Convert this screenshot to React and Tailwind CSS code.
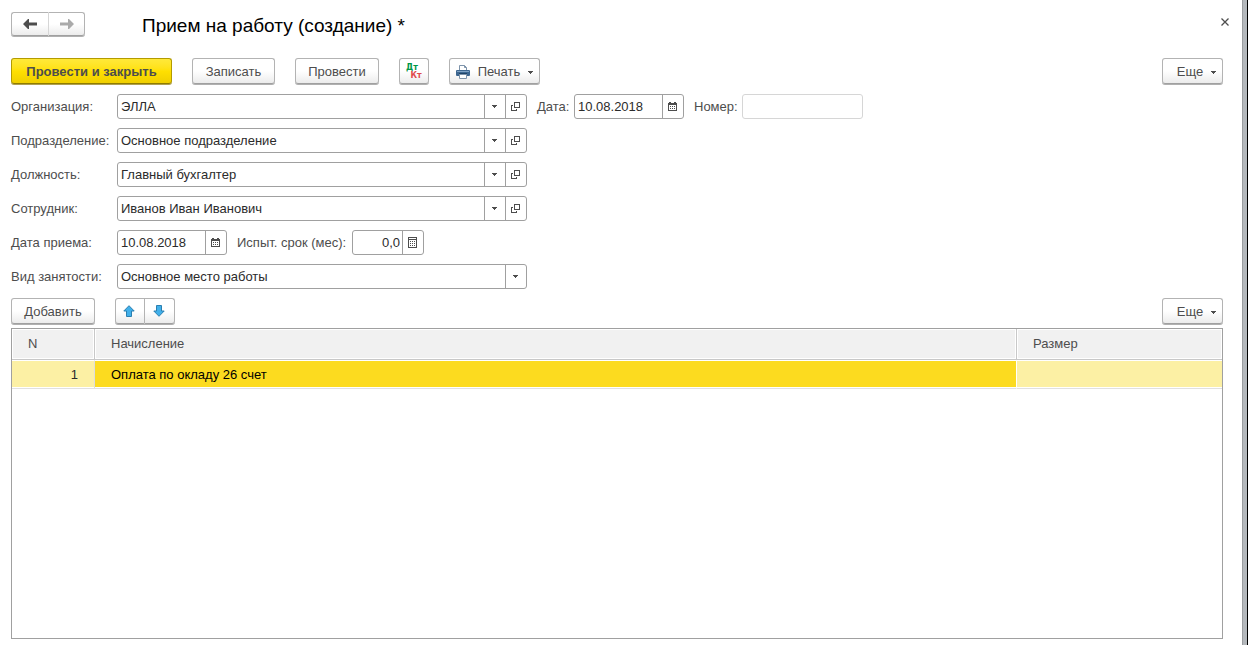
// src/pages/personal/PriemNaRabotu.jsx
import { useState } from "react";

const inputClass = "min-w-0 flex-1 h-full bg-transparent px-[3px] text-[#2b2b2b] outline-none";
const fieldClass =
  "flex h-[25px] items-stretch overflow-hidden rounded-[3px] border border-[#a0a0a0] bg-white";
const fieldButtonClass =
  "flex w-[21px] shrink-0 items-center justify-center border-l border-[#a0a0a0] pr-px text-[#4d4d4d]";
const buttonBase =
  "flex items-center justify-center rounded-[3px] border border-[#b3b3b3] border-b-[#a0a0a0] bg-linear-to-b from-white from-50% to-[#ececec] text-[#4d4d4d] shadow-[0_1px_0_#b0b0b0]";
const buttonClass = `${buttonBase} h-[26px] pt-0.5`;
const moveButtonClass = `${buttonBase} h-[26px] pr-0.5`;
const navButtonClass = `${buttonBase} h-6`;

const headCellClass =
  "border-b border-[#c8c8c8] bg-[#f1f1f1] px-4 font-normal shadow-[inset_0_0_0_1px_#fff]";
const cellClass =
  "border-t border-b border-t-white border-b-[#e0e0e0] px-4 shadow-[inset_0_-1px_0_#fff]";

function Caret() {
  return (
    <svg width="5" height="3" viewBox="0 0 5 3" fill="currentColor" shapeRendering="crispEdges">
      <path d="M0 0h5v1H0zM1 1h3v1H1zM2 2h1v1H2z" />
    </svg>
  );
}

function OpenIcon() {
  return (
    <svg width="9" height="9" viewBox="0 0 9 9" fill="none" stroke="currentColor" shapeRendering="crispEdges">
      <path d="M3.5 0.5h5v5h-5zM2 3.5H0.5v5h5V7" />
    </svg>
  );
}

function CalendarIcon() {
  return (
    <svg width="9" height="9" viewBox="0 0 9 9" fill="currentColor" shapeRendering="crispEdges">
      <path d="M1 0h2v1h3V0h2v1h1v8H0V1h1zM1 3v5h7V3z" fillRule="evenodd" />
      <path d="M2 4h1v1H2zM4 4h1v1H4zM6 4h1v1H6zM2 6h1v1H2zM4 6h1v1H4zM6 6h1v1H6z" />
    </svg>
  );
}

function CalculatorIcon() {
  return (
    <svg width="9" height="11" viewBox="0 0 9 11" fill="currentColor" shapeRendering="crispEdges">
      <path d="M0 0h9v11H0zM1 1v1h7V1zM1 3v7h7V3z" fillRule="evenodd" />
      <path d="M2 4h1v1H2zM4 4h1v1H4zM6 4h1v1H6zM2 6h1v1H2zM4 6h1v1H4zM6 6h1v1H6zM2 8h1v1H2zM4 8h1v1H4zM6 8h1v1H6z" />
    </svg>
  );
}

function PrinterIcon() {
  return (
    <svg width="14" height="14" viewBox="0 0 14 14">
      <path d="M3.5 6V0.5h5l2 2V6" fill="#fff" stroke="#7d93aa" />
      <path d="M8.5 0.5v2h2" fill="none" stroke="#7d93aa" />
      <rect x="0" y="5" width="14" height="6" rx="1" fill="#3c6690" />
      <rect x="1" y="6" width="12" height="1" fill="#7fa2c4" />
      <rect x="3" y="8" width="8" height="1" fill="#1f4468" />
      <path d="M3.5 9.5h7v4h-7z" fill="#fff" stroke="#7d93aa" />
    </svg>
  );
}

function NavArrow({ back }) {
  return (
    <svg width="14" height="10" viewBox="0 0 14 10" fill="currentColor">
      {back ? (
        <path d="M0 5l5-5h1v3.5h8v3H6V10H5z" />
      ) : (
        <path d="M14 5L9 0H8v3.5H0v3h8V10h1z" />
      )}
    </svg>
  );
}

function MoveArrow({ up }) {
  return (
    <svg width="12" height="12" viewBox="0 0 12 12" fill="#41b0ea" stroke="#2b7fb0">
      {up ? (
        <path d="M6 0.7L11.2 6H8.5v5.5h-5V6H0.8z" />
      ) : (
        <path d="M6 11.3L0.8 6h2.7V0.5h5V6h2.7z" />
      )}
    </svg>
  );
}

function DtKtIcon() {
  return (
    <span className="flex flex-col font-['DejaVu_Sans',sans-serif] text-[8px] leading-[8px] font-bold">
      <span className="pr-1 text-left text-[#009646]">Дт</span>
      <span className="pl-1 text-[#e04b4b]">Кт</span>
    </span>
  );
}

function RefField({ id, label, defaultValue }) {
  return (
    <>
      <label htmlFor={id} className="w-[106px] shrink-0">{label}</label>
      <div className={`${fieldClass} w-[410px]`}>
        <input id={id} type="text" defaultValue={defaultValue} className={inputClass} />
        <button type="button" aria-label="Выбрать" className={fieldButtonClass}><Caret /></button>
        <button type="button" aria-label="Открыть" className={fieldButtonClass}><OpenIcon /></button>
      </div>
    </>
  );
}

function DateField({ id }) {
  return (
    <div className={`${fieldClass} w-[110px]`}>
      <input id={id} type="text" defaultValue="10.08.2018" className={inputClass} />
      <button type="button" aria-label="Календарь" className={fieldButtonClass}><CalendarIcon /></button>
    </div>
  );
}

function MoreButton() {
  return (
    <button type="button" className={`${buttonClass} ml-auto w-[61px] gap-2 pl-2`}>
      Еще <Caret />
    </button>
  );
}

const accruals = [{ id: 1, name: "Оплата по окладу 26 счет", amount: "" }];

function App() {
  const [selected, setSelected] = useState(1);

  return (
    <div className="flex min-h-screen bg-white font-['Liberation_Sans',Arial,sans-serif] text-[13px] leading-4 text-[#4d4d4d]">
      <main className="flex min-w-0 flex-1 flex-col pt-3 pr-[19px] pb-1.5 pl-[11px]">
        <header className="flex h-[26px] items-start">
          <div className="flex">
            <button type="button" aria-label="Назад" className={`${navButtonClass} w-[38px] rounded-r-none border-r-[#d6d6d6]`}>
              <NavArrow back />
            </button>
            <button type="button" aria-label="Вперед" className={`${navButtonClass} w-9 rounded-l-none border-l-0`}>
              <span className="text-[#aaaaaa]"><NavArrow /></span>
            </button>
          </div>
          <h1 className="ml-[57px] text-[19px] leading-7 text-black">Прием на работу (создание) *</h1>
          <button type="button" aria-label="Закрыть" className="-mr-3 ml-auto flex size-5 items-center justify-center">
            <svg width="8" height="8" viewBox="0 0 8 8" stroke="currentColor" strokeWidth="1.3">
              <path d="M0.5 0.5l7 7M7.5 0.5l-7 7" />
            </svg>
          </button>
        </header>

        <div className="mt-5 flex h-[27px] items-start gap-5">
          <button
            type="button"
            className="h-[26px] w-[161px] rounded-[3px] border border-[#b39b00] border-b-[#8f7c00] bg-linear-to-b from-[#ffe939] via-[#ffe000] to-[#f0cf00] pt-0.5 font-bold shadow-[0_1px_0_#b0a050]"
          >
            Провести и закрыть
          </button>
          <button type="button" className={`${buttonClass} w-[83px]`}>Записать</button>
          <button type="button" className={`${buttonClass} w-[84px]`}>Провести</button>
          <button type="button" aria-label="Дт Кт" className={`${buttonClass} w-[30px]`}><DtKtIcon /></button>
          <button type="button" className={`${buttonClass} w-[91px] gap-2`}>
            <PrinterIcon /> Печать <Caret />
          </button>
          <MoreButton />
        </div>

        <form className="mt-[9px] flex flex-col gap-[9px]">
          <div className="flex items-center">
            <RefField id="org" label="Организация:" defaultValue="ЭЛЛА" />
            <label htmlFor="date" className="w-[47px] pl-2.5">Дата:</label>
            <DateField id="date" />
            <label htmlFor="number" className="w-[58px] pl-2.5">Номер:</label>
            <input
              id="number"
              type="text"
              className="h-[25px] w-[121px] rounded-[3px] border border-[#d6d6d6] px-[3px] outline-none"
            />
          </div>
          <div className="flex items-center">
            <RefField id="dept" label="Подразделение:" defaultValue="Основное подразделение" />
          </div>
          <div className="flex items-center">
            <RefField id="position" label="Должность:" defaultValue="Главный бухгалтер" />
          </div>
          <div className="flex items-center">
            <RefField id="employee" label="Сотрудник:" defaultValue="Иванов Иван Иванович" />
          </div>
          <div className="flex items-center">
            <label htmlFor="hired" className="w-[106px] shrink-0">Дата приема:</label>
            <DateField id="hired" />
            <label htmlFor="trial" className="w-[125px] pl-2.5">Испыт. срок (мес):</label>
            <div className={`${fieldClass} w-[72px]`}>
              <input id="trial" type="text" defaultValue="0,0" className="min-w-0 flex-1 pr-0.5 text-right text-[#2b2b2b] outline-none" />
              <button type="button" aria-label="Калькулятор" className={fieldButtonClass}><CalculatorIcon /></button>
            </div>
          </div>
          <div className="flex items-center">
            <label htmlFor="kind" className="w-[106px] shrink-0">Вид занятости:</label>
            <div className={`${fieldClass} relative w-[410px]`}>
              <select id="kind" className="w-full appearance-none bg-transparent px-[3px] text-[#2b2b2b] outline-none">
                <option>Основное место работы</option>
              </select>
              <span className={`${fieldButtonClass} pointer-events-none absolute inset-y-0 right-0`}><Caret /></span>
            </div>
          </div>
        </form>

        <div className="mt-[9px] flex h-[27px] items-start gap-5">
          <button type="button" className={`${buttonClass} w-[84px]`}>Добавить</button>
          <div className="flex">
            <button type="button" aria-label="Вверх" className={`${moveButtonClass} w-[30px] rounded-r-none`}>
              <MoveArrow up />
            </button>
            <button type="button" aria-label="Вниз" className={`${moveButtonClass} w-[30px] rounded-l-none border-l-0`}>
              <MoveArrow />
            </button>
          </div>
          <MoreButton />
        </div>

        <div className="mt-[3px] flex-1 border border-[#a0a0a0]">
          <table className="w-full table-fixed border-separate border-spacing-0 text-left">
            <colgroup>
              <col className="w-[83px]" />
              <col />
              <col className="w-[205px]" />
            </colgroup>
            <thead>
              <tr className="h-[31px]">
                <th className={`${headCellClass} border-r`}>N</th>
                <th className={`${headCellClass} border-r`}>Начисление</th>
                <th className={headCellClass}>Размер</th>
              </tr>
            </thead>
            <tbody>
              {accruals.map((row) => (
                <tr key={row.id} onClick={() => setSelected(row.id)} className="h-[29px] text-black">
                  <td className={`${cellClass} border-r border-r-[#dddddd] bg-[#fcf0a4] text-right text-[#2b2b2b]`}>
                    {row.id}
                  </td>
                  <td
                    className={`${cellClass} border-r border-r-white ${
                      selected === row.id ? "bg-[#fcdb1f]" : "bg-[#fcf0a4]"
                    }`}
                  >
                    {row.name}
                  </td>
                  <td className={`${cellClass} bg-[#fcf0a4]`}>{row.amount}</td>
                </tr>
              ))}
            </tbody>
          </table>
        </div>
      </main>
      <div className="w-[6px] shrink-0 border-r border-l border-r-black border-l-[#9a9da0] bg-[#b4b8bc]" />
    </div>
  );
}

export default App;
